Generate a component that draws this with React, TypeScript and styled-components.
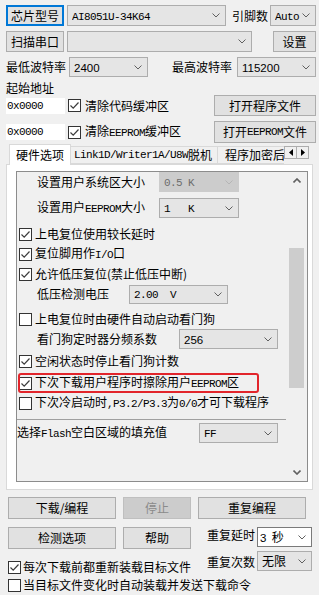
import React from 'react';
import styled, { createGlobalStyle, css } from 'styled-components';

const GlobalStyle = createGlobalStyle`
  html, body { margin: 0; padding: 0; background: #f0f0f0; }
  body {
    font-family: "Noto Sans CJK SC", "Noto Sans", sans-serif;
    font-size: 12px;
    color: #000;
  }
  * { box-sizing: border-box; }
`;

const Page = styled.div`
  width: 319px;
  height: 595px;
  overflow: hidden;
  padding: 5px 3px 0 6px;
  display: flex;
  flex-direction: column;
`;

const Row = styled.div<{ $mt?: number; $h?: number; $align?: string }>`
  display: flex;
  align-items: ${p => p.$align ?? 'center'};
  height: ${p => p.$h ?? 21}px;
  margin-top: ${p => p.$mt ?? 0}px;
  flex: none;
`;

const Mono = styled.span`
  font-family: "Liberation Mono", "DejaVu Sans Mono", monospace;
  font-size: 11px;
  letter-spacing: -0.6px;
`;

const Digits = styled.span`
  font-family: "Liberation Sans", Arial, sans-serif;
  font-size: 11.5px;
`;

const Button = styled.button<{ $w: number; $h?: number; $ml?: number; $focused?: boolean }>`
  width: ${p => p.$w}px;
  height: ${p => p.$h ?? 21}px;
  margin: 0 0 0 ${p => p.$ml ?? 0}px;
  padding: 0;
  flex: none;
  border: 1px solid #adadad;
  background: #e1e1e1;
  font-family: inherit;
  font-size: 12px;
  color: #000;
  line-height: 16px;
  display: flex;
  align-items: center;
  justify-content: center;
  white-space: nowrap;
  ${p => p.$focused && css`
    border-color: #0078d7;
    box-shadow: inset 0 0 0 1px #0078d7;
  `}
  &:disabled {
    background: #cccccc;
    border-color: #bfbfbf;
    color: #8a8a8a;
  }
`;

const Label = styled.span<{ $w?: number; $ml?: number; $pl?: number; $mt?: number }>`
  display: inline-block;
  flex: none;
  width: ${p => (p.$w ? `${p.$w}px` : 'auto')};
  margin-left: ${p => p.$ml ?? 0}px;
  margin-top: ${p => p.$mt ?? 0}px;
  padding-left: ${p => p.$pl ?? 0}px;
  line-height: 16px;
  white-space: nowrap;
`;

type Tone = 'gray' | 'white' | 'disabled';

const ComboFrame = styled.div<{ $w: number; $h?: number; $ml?: number; $mr?: number; $tone?: Tone }>`
  display: flex;
  align-items: center;
  flex: none;
  width: ${p => p.$w}px;
  height: ${p => p.$h ?? 20}px;
  margin-left: ${p => p.$ml ?? 0}px;
  margin-right: ${p => p.$mr ?? 0}px;
  padding: 0 5px 0 4px;
  border: 1px solid #adadad;
  background: #e5e5e5;
  color: #000;
  line-height: 16px;
  ${p => p.$tone === 'white' && css`
    background: #ffffff;
    border-color: #7a7a7a;
    padding-left: 2px;
  `}
  ${p => p.$tone === 'disabled' && css`
    background: #cccccc;
    border-color: #cccccc;
    color: #6d6d6d;
  `}
`;

const ComboText = styled.span`
  flex: 1;
  overflow: hidden;
  white-space: pre;
`;

const Chevron: React.FC<{ color?: string }> = ({ color = '#606060' }) => (
  <svg width="8" height="5" viewBox="0 0 8 5">
    <polyline points="0.5,0.5 4,4 7.5,0.5" fill="none" stroke={color} strokeWidth="1" />
  </svg>
);

const Combo: React.FC<{
  w: number; h?: number; ml?: number; mr?: number; tone?: Tone; children?: React.ReactNode;
}> = ({ w, h, ml, mr, tone = 'gray', children }) => (
  <ComboFrame $w={w} $h={h} $ml={ml} $mr={mr} $tone={tone}>
    <ComboText>{children}</ComboText>
    <Chevron color={tone === 'disabled' ? '#b5b5b5' : '#606060'} />
  </ComboFrame>
);

const TextBox = styled.div<{ $w: number; $h?: number }>`
  width: ${p => p.$w}px;
  height: ${p => p.$h ?? 16}px;
  flex: none;
  background: #fff;
  display: flex;
  align-items: center;
  padding-left: 1px;
`;

const CheckFrame = styled.span`
  width: 13px;
  height: 13px;
  flex: none;
  border: 1px solid #333;
  background: #fff;
  display: inline-flex;
  align-items: center;
  justify-content: center;
`;

const CheckItem = styled.span<{ $ml?: number; $gap?: number; $mt?: number }>`
  display: inline-flex;
  align-items: center;
  gap: ${p => p.$gap ?? 3}px;
  margin-left: ${p => p.$ml ?? 0}px;
  margin-top: ${p => p.$mt ?? 0}px;
  white-space: nowrap;
  line-height: 16px;
  flex: none;
`;

const Check: React.FC<{ checked?: boolean }> = ({ checked }) => (
  <CheckFrame>
    {checked && (
      <svg width="11" height="11" viewBox="0 0 11 11">
        <polyline points="1.5,5.5 4.2,8.2 9.5,2.5" fill="none" stroke="#3c3c3c" strokeWidth="1.2" />
      </svg>
    )}
  </CheckFrame>
);

const CheckBox: React.FC<{ checked?: boolean; ml?: number; gap?: number; mt?: number; children?: React.ReactNode }> = ({
  checked, ml, gap, mt, children,
}) => (
  <CheckItem $ml={ml} $gap={gap} $mt={mt}>
    <Check checked={checked} />
    <span>{children}</span>
  </CheckItem>
);

/* Tabs */
const TabRow = styled.div`
  display: flex;
  align-items: flex-start;
  height: 21px;
  margin-top: 1px;
  position: relative;
  z-index: 1;
  flex: none;
`;

const TabScroll = styled.div`
  flex: 1;
  height: 21px;
  overflow: hidden;
  display: flex;
  align-items: flex-start;
  padding-left: 3px;
`;

const Tab = styled.div<{ $w: number; $active?: boolean; $pl?: number }>`
  width: ${p => p.$w}px;
  flex: none;
  height: ${p => (p.$active ? 21 : 18)}px;
  margin-top: ${p => (p.$active ? 0 : 2)}px;
  margin-left: ${p => (p.$active ? 0 : -1)}px;
  border: 1px solid #d9d9d9;
  border-bottom: ${p => (p.$active ? 'none' : '1px solid #d9d9d9')};
  background: ${p => (p.$active ? '#ffffff' : '#f0f0f0')};
  display: flex;
  align-items: center;
  justify-content: ${p => (p.$pl !== undefined ? 'flex-start' : 'center')};
  padding-left: ${p => p.$pl ?? 0}px;
  line-height: 16px;
  white-space: nowrap;
  overflow: hidden;
`;

const TabArrows = styled.div`
  display: flex;
  margin-top: 2px;
  margin-right: 7px;
  flex: none;
`;

const TabArrow = styled.div`
  width: 13px;
  height: 13px;
  border: 1px solid #adadad;
  background: #f0f0f0;
  display: flex;
  align-items: center;
  justify-content: center;
  & + & { margin-left: -1px; }
`;

const TabPanel = styled.div`
  width: 307px;
  height: 326px;
  margin-top: -1px;
  flex: none;
  background: #fff;
  border: 1px solid #d9d9d9;
  padding: 6px 4px 7px 9px;
  display: flex;
`;

const ListBox = styled.div`
  flex: 1;
  border: 1px solid #8c8c8c;
  background: #f0f0f0;
  display: flex;
`;

const ListContent = styled.div`
  flex: 1;
  display: flex;
  flex-direction: column;
  overflow: hidden;
`;

const OptRow = styled.div<{ $mt?: number }>`
  display: flex;
  align-items: center;
  height: 20px;
  margin-top: ${p => p.$mt ?? 0}px;
  flex: none;
  position: relative;
`;

const Highlight = styled.div`
  position: absolute;
  left: 1px;
  top: 0;
  width: 241px;
  height: 20px;
  border: 2px solid #e2252b;
  border-radius: 3px;
  pointer-events: none;
`;

const Separator = styled.div<{ $mt?: number }>`
  height: 1px;
  margin: ${p => p.$mt ?? 0}px 2px 0 0;
  background: #a0a0a0;
  flex: none;
`;

const ScrollBar = styled.div`
  width: 17px;
  margin-right: 2px;
  display: flex;
  flex-direction: column;
  background: #f0f0f0;
  flex: none;
`;

const ScrollBtn = styled.div`
  height: 17px;
  display: flex;
  align-items: center;
  justify-content: center;
  flex: none;
`;

const ScrollTrack = styled.div<{ $offset: number }>`
  flex: 1;
  padding-top: ${p => p.$offset}px;
  display: flex;
  flex-direction: column;
`;

const Thumb = styled.div<{ $h: number }>`
  height: ${p => p.$h}px;
  margin: 0 1px;
  background: #cdcdcd;
`;

const ArrowGlyph: React.FC<{ up?: boolean }> = ({ up }) => (
  <svg width="8" height="5" viewBox="0 0 8 5">
    <polyline
      points={up ? '0.5,4.5 4,1 7.5,4.5' : '0.5,0.5 4,4 7.5,0.5'}
      fill="none"
      stroke="#606060"
      strokeWidth="1.6"
    />
  </svg>
);

const Spacer = styled.div`
  flex: 1;
`;

export default function App() {
  return (
    <>
      <GlobalStyle />
      <Page>
        <Row $h={21}>
          <Button $w={58} $focused>芯片型号</Button>
          <Combo w={159} h={21} ml={3}><Mono>AI8051U-34K64</Mono></Combo>
          <Label $ml={6} $w={34}>引脚数</Label>
          <Combo w={46} h={21} ml={4}><Mono>Auto</Mono></Combo>
        </Row>

        <Row $h={21} $mt={5}>
          <Button $w={58}>扫描串口</Button>
          <Combo w={185} h={21} ml={3}></Combo>
          <Button $w={43} $ml={21}>设置</Button>
        </Row>

        <Row $h={20} $mt={5}>
          <Label $w={62}>最低波特率</Label>
          <Combo w={79} ml={1}><Digits>2400</Digits></Combo>
          <Label $ml={24} $w={58}>最高波特率</Label>
          <Combo w={79} ml={7}><Digits>115200</Digits></Combo>
        </Row>

        <Row $h={14} $mt={4}>
          <Label>起始地址</Label>
        </Row>

        <Row $h={21}>
          <TextBox $w={59}><Mono>0x0000</Mono></TextBox>
          <CheckBox checked ml={3} gap={4}>清除代码缓冲区</CheckBox>
          <Spacer />
          <Button $w={102} $h={21}>打开程序文件</Button>
        </Row>

        <Row $h={22} $mt={5}>
          <TextBox $w={59}><Mono>0x0000</Mono></TextBox>
          <CheckBox checked ml={3} gap={4}>清除<Mono>EEPROM</Mono>缓冲区</CheckBox>
          <Spacer />
          <Button $w={102} $h={22}>打开<Mono>EEPROM</Mono>文件</Button>
        </Row>

        <TabRow>
          <TabScroll>
            <Tab $w={62} $active>硬件选项</Tab>
            <Tab $w={148} $pl={3}><Mono>Link1D/Writer1A/U8W</Mono>脱机</Tab>
            <Tab $w={80} $pl={7}>程序加密后</Tab>
          </TabScroll>
          <TabArrows>
            <TabArrow>
              <svg width="4" height="7" viewBox="0 0 4 7"><polygon points="4,0 0,3.5 4,7" fill="#000" /></svg>
            </TabArrow>
            <TabArrow>
              <svg width="4" height="7" viewBox="0 0 4 7"><polygon points="0,0 4,3.5 0,7" fill="#000" /></svg>
            </TabArrow>
          </TabArrows>
        </TabRow>

        <TabPanel>
          <ListBox>
            <ListContent>
              <OptRow>
                <Label $pl={20} $w={142}>设置用户系统区大小</Label>
                <Combo w={80} tone="disabled"><Mono>0.5 K</Mono></Combo>
              </OptRow>
              <OptRow $mt={6}>
                <Label $pl={20} $w={142}>设置用户<Mono>EEPROM</Mono>大小</Label>
                <Combo w={80}><Mono>{'1   K'}</Mono></Combo>
              </OptRow>
              <OptRow $mt={6}>
                <CheckBox checked ml={2}>上电复位使用较长延时</CheckBox>
              </OptRow>
              <OptRow>
                <CheckBox checked ml={2}>复位脚用作<Mono>I/O</Mono>口</CheckBox>
              </OptRow>
              <OptRow>
                <CheckBox checked ml={2}>允许低压复位(禁止低压中断)</CheckBox>
              </OptRow>
              <OptRow>
                <Label $pl={20} $w={112}>低压检测电压</Label>
                <Combo w={99} h={19}><Mono>{'2.00  V'}</Mono></Combo>
              </OptRow>
              <OptRow $mt={5}>
                <CheckBox ml={2}>上电复位时由硬件自动启动看门狗</CheckBox>
              </OptRow>
              <OptRow>
                <Label $pl={20} $w={162}>看门狗定时器分频系数</Label>
                <Combo w={99}><Digits>256</Digits></Combo>
              </OptRow>
              <OptRow $mt={2}>
                <CheckBox checked ml={2}>空闲状态时停止看门狗计数</CheckBox>
              </OptRow>
              <OptRow $mt={2}>
                <CheckBox checked ml={2}>下次下载用户程序时擦除用户<Mono>EEPROM</Mono>区</CheckBox>
                <Highlight />
              </OptRow>
              <OptRow>
                <CheckBox ml={2}>下次冷启动时<Mono>,P3.2/P3.3</Mono>为<Mono>0/0</Mono>才可下载程序</CheckBox>
              </OptRow>
              <Separator $mt={6} />
              <OptRow $mt={3}>
                <Label $w={182}>选择<Mono>Flash</Mono>空白区域的填充值</Label>
                <Combo w={79}><Mono>FF</Mono></Combo>
              </OptRow>
            </ListContent>
            <ScrollBar>
              <ScrollBtn><ArrowGlyph up /></ScrollBtn>
              <ScrollTrack $offset={59}>
                <Thumb $h={140} />
              </ScrollTrack>
              <ScrollBtn><ArrowGlyph /></ScrollBtn>
            </ScrollBar>
          </ListBox>
        </TabPanel>

        <Row $h={22} $mt={7}>
          <Button $w={108} $h={22} $ml={2}>下载/编程</Button>
          <Button $w={68} $h={22} $ml={7} disabled>停止</Button>
          <Button $w={108} $h={22} $ml={7}>重复编程</Button>
        </Row>

        <Row $h={22} $mt={8} $align="flex-start">
          <Button $w={108} $h={22} $ml={2}>检测选项</Button>
          <Button $w={68} $h={22} $ml={7}>帮助</Button>
          <Label $ml={16} $w={50}>重复延时</Label>
          <Combo w={55} tone="white"><Digits>3</Digits>{'  秒'}</Combo>
        </Row>

        <Row $h={22} $mt={2} $align="flex-start">
          <CheckBox checked ml={2} gap={2} mt={8}>每次下载前都重新装载目标文件</CheckBox>
          <Spacer />
          <Label $mt={3} $w={50}>重复次数</Label>
          <Combo w={55} mr={4}>无限</Combo>
        </Row>

        <Row $h={16} $mt={4}>
          <CheckBox ml={2} gap={2}>当目标文件变化时自动装载并发送下载命令</CheckBox>
        </Row>
      </Page>
    </>
  );
}
